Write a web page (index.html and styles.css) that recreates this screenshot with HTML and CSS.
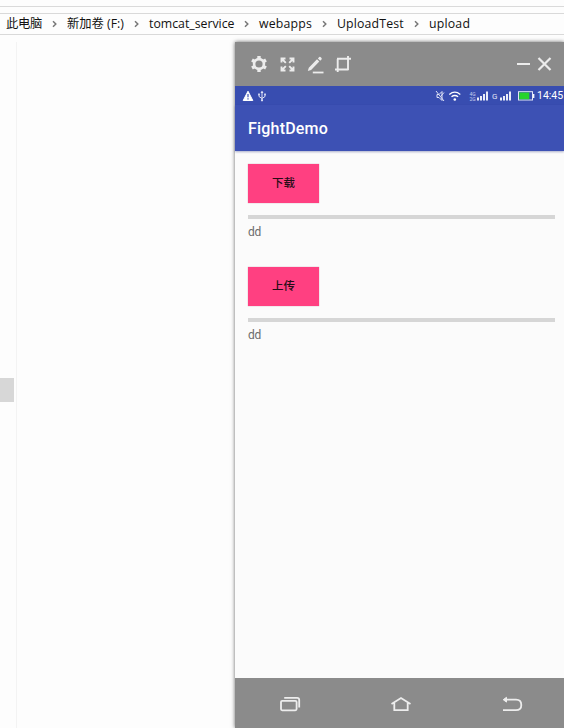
FILE: index.html
```html
<!DOCTYPE html>
<html lang="zh-CN">
<head>
<meta charset="utf-8">
<title>FightDemo</title>
<link rel="stylesheet" href="styles.css">
</head>
<body>
<div class="ribbon"></div>
<nav class="path">
  <span class="crumb c1">此电脑</span><svg class="chev" viewBox="0 0 25 12"><path d="M11 3.3 13.8 6 11 8.7"/></svg>
  <span class="crumb c2">新加卷 (F:)</span><svg class="chev" viewBox="0 0 25 12"><path d="M11 3.3 13.8 6 11 8.7"/></svg>
  <span class="crumb c3">tomcat_service</span><svg class="chev" viewBox="0 0 25 12"><path d="M11 3.3 13.8 6 11 8.7"/></svg>
  <span class="crumb c4">webapps</span><svg class="chev" viewBox="0 0 25 12"><path d="M11 3.3 13.8 6 11 8.7"/></svg>
  <span class="crumb c5">UploadTest</span><svg class="chev" viewBox="0 0 25 12"><path d="M11 3.3 13.8 6 11 8.7"/></svg>
  <span class="crumb c6">upload</span>
</nav>
<div class="desktop">
  <aside class="tree"><div class="selected"></div></aside>
  <main class="window">
    <header class="tools">
      <svg class="tool" viewBox="0 0 20 20"><circle cx="10" cy="10" r="4.9" fill="none" stroke="#ececec" stroke-width="2.6"/><path d="M10 2v3.3M10 14.7V18M3 6l3 1.7M14 12.3l3 1.7M3 14l3-1.7M14 7.7 17 6" stroke="#ececec" stroke-width="3.4" fill="none"/></svg>
      <svg class="tool" viewBox="0 0 20 20"><path d="M4.5 8.5v-4h4M12.5 4.5h4v4M16.5 12.5v4h-4M8.5 16.5h-4v-4M5 5l3.8 3.8M16 5l-3.8 3.8M16 16l-3.8-3.8M5 16l3.800-3.800" fill="none" stroke="#ececec" stroke-width="1.9"/></svg>
      <svg class="tool" viewBox="0 0 20 20"><path d="m2.800 17 1-3.300 8.200-8.400 2.300 2.300L6.100 16zM12.900 4.400l1.300-1.300q.7-.6 1.300 0l1 1q.6.600 0 1.300l-1.300 1.300z" fill="#ececec"/><path d="M7.800 18.500h10.700" stroke="#ececec" stroke-width="1.800"/></svg>
      <svg class="tool" viewBox="0 0 20 20"><path d="M4.700 5v10.500H15M4 4.800h14M15 2v14.300M2 15.500h3M4.700 15v3" fill="none" stroke="#ececec" stroke-width="1.900"/></svg>
      <svg class="winctl" viewBox="0 0 40 20"><path d="M5 10h13" stroke="#ececec" stroke-width="2"/><path d="m26.500 4 12 12M38.500 4l-12 12" stroke="#ececec" stroke-width="2.200"/></svg>
    </header>
    <div class="status">
      <svg class="alerts" viewBox="0 0 26 16"><path d="M6 3.200 10.800 12.500H1.200z" fill="#fff" stroke="#fff" stroke-linejoin="round"/><path d="M6 6v3.300M6 10.300v1.200" stroke="#3b50b2" stroke-width="1.200"/><path d="M20 3.500V12M17 6.300v2.200l3 2 3-2V6.300" fill="none" stroke="#dfe3f6"/><path d="M18.500 5 20 2.700 21.500 5zM16.200 5.500h1.600v1.700h-1.600zM22.200 5.500h1.600v1.700h-1.600z" fill="#dfe3f6"/><circle cx="20" cy="12.300" r="1.100" fill="#dfe3f6"/></svg>
      <svg class="signals" viewBox="0 0 102 16">
        <path d="M2 6.500h2l3-3v9l-3-3H2zM1 3l8 10M9 4.500 6 8" fill="none" stroke="#dfe3f6"/>
        <path d="M14.300 6.500q5.500-4.600 11 0M16.500 8.800q3.300-2.600 6.600 0" fill="none" stroke="#fff" stroke-width="1.300"/><circle cx="19.800" cy="11.500" r="1.300" fill="#fff"/>
        <text x="34.500" y="8" class="net">4G</text><text x="34.500" y="12.600" class="net">2G</text>
        <path d="M43 9.500v3M46 8v4.500M49 6v6.500M52 3.500v9" stroke="#fff" stroke-width="1.800"/>
        <text x="57" y="11" class="gsm">G</text>
        <path d="M66 9.500v3M69 8v4.500M72 6v6.500M75 3.500v9" stroke="#fff" stroke-width="1.800"/>
        <rect x="83.500" y="3.700" width="14" height="8.300" fill="none" stroke="#e2e6f6"/><rect x="84.300" y="4.500" width="10" height="6.800" fill="#25d32c"/><path d="M98.700 6v4" stroke="#fff" stroke-width="1.300"/>
      </svg>
      <span class="clock">14:45</span>
    </div>
    <h1 class="appbar">FightDemo</h1>
    <section class="content">
      <div class="task">
        <button class="action">下载</button>
        <div class="bar"></div>
        <p class="info">dd</p>
      </div>
      <div class="task">
        <button class="action">上传</button>
        <div class="bar"></div>
        <p class="info">dd</p>
      </div>
    </section>
    <footer class="keys">
      <svg class="key" viewBox="0 0 24 20"><rect x="3" y="6.800" width="15.600" height="9.500" rx="1.200"/><path d="M6.200 3.800h13q2 0 2 2v7.600"/></svg>
      <svg class="key" viewBox="0 0 24 20"><path d="m2.500 10 9.500-6 9.500 6M5.300 9v7.200h13.400V9"/></svg>
      <svg class="key" viewBox="0 0 24 20"><path d="M5 5.700h11q5.300 0 5.300 5.200T16 16.100H3"/><path d="m6.500 3.300-3.300 2.400 3.300 2.400z" fill="#ededed" stroke-width="1"/></svg>
    </footer>
  </main>
</div>
</body>
</html>
```
FILE: styles.css
```css
* { box-sizing: border-box; }
body {
  margin: 0;
  width: 564px;
  height: 728px;
  overflow: hidden;
  background: #fdfdfd;
  font-family: "Noto Sans", "Noto Sans CJK SC", sans-serif;
}
.ribbon { height: 7px; border-bottom: 1px solid #dadada; }
.path {
  height: 22px;
  margin-top: 6px;
  padding-left: 6px;
  display: flex;
  align-items: center;
  border-top: 1px solid #d9d9d9;
  border-bottom: 1px solid #d9d9d9;
  font-family: "Open Sans", "Noto Sans CJK SC", sans-serif;
  font-size: 12.3px;
  line-height: 18px;
  color: #111;
  white-space: nowrap;
}
.crumb { flex: none; }
.c1 { width: 36px; letter-spacing: -.3px; }
.c2 { width: 57px; }
.c3 { width: 85px; }
.c4 { width: 53px; letter-spacing: .2px; }
.c5 { width: 67px; letter-spacing: .15px; }
.c6 { letter-spacing: .2px; }
.chev { flex: none; width: 25px; height: 12px; fill: none; stroke: #777; stroke-width: 1.5; }
.desktop { display: flex; height: 693px; padding-top: 7px; }
.tree {
  width: 17px;
  margin-right: 218px;
  padding-top: 336px;
  border-right: 1px solid #f3f3f3;
}
.selected { width: 14px; height: 24px; background: #d7d7d7; }
.window {
  width: 329px;
  display: flex;
  flex-direction: column;
  background: #fbfbfb;
  box-shadow: 0 0 4px rgba(0, 0, 0, .6);
}
.tools {
  height: 44px;
  flex: none;
  padding-left: 14px;
  display: flex;
  align-items: center;
  gap: 8px;
  background: #8b8b8b;
}
.tool { width: 20px; height: 20px; }
.winctl { width: 40px; height: 20px; margin: 0 12px 0 auto; }
.status {
  height: 19px;
  flex: none;
  padding-left: 7px;
  display: flex;
  align-items: center;
  background: #384db0;
}
.alerts { width: 26px; height: 16px; }
.signals { width: 102px; height: 16px; margin-left: 167px; }
.net { font: 5px Roboto, sans-serif; fill: #c5cdec; }
.gsm { font: 8px Roboto, sans-serif; fill: #e2e6f6; }
.clock { color: #fff; font: 10.5px/19px Roboto, sans-serif; }
.appbar {
  height: 46px;
  flex: none;
  margin: 0;
  padding-left: 13px;
  color: #fff;
  background: #3d51b4;
  font: 500 16px/48px Roboto, sans-serif;
  letter-spacing: .2px;
  box-shadow: 0 1px 2px rgba(50, 60, 130, .4);
}
.content { flex: 1; padding: 13px 9px 0 13px; }
.task { height: 103px; }
.action {
  display: block;
  width: 71px;
  height: 39px;
  padding: 0 0 2px;
  border: 0;
  background: #ff4081;
  color: #260d16;
  font: 500 11.5px/37px "Noto Sans CJK SC", sans-serif;
  box-shadow: 0 0 1px rgba(160, 40, 90, .5);
}
.bar { height: 4px; margin-top: 12px; background: #d6d6d6; }
.info { margin: 5px 0 0; color: #6b6b6b; font: 12px/17px Roboto, sans-serif; letter-spacing: -.3px; }
.keys {
  height: 50px;
  flex: none;
  padding: 2px 40px 0 43px;
  display: flex;
  justify-content: space-between;
  align-items: center;
  background: #8b8b8b;
}
.key { width: 24px; height: 20px; fill: none; stroke: #ededed; stroke-width: 1.8; }
```
